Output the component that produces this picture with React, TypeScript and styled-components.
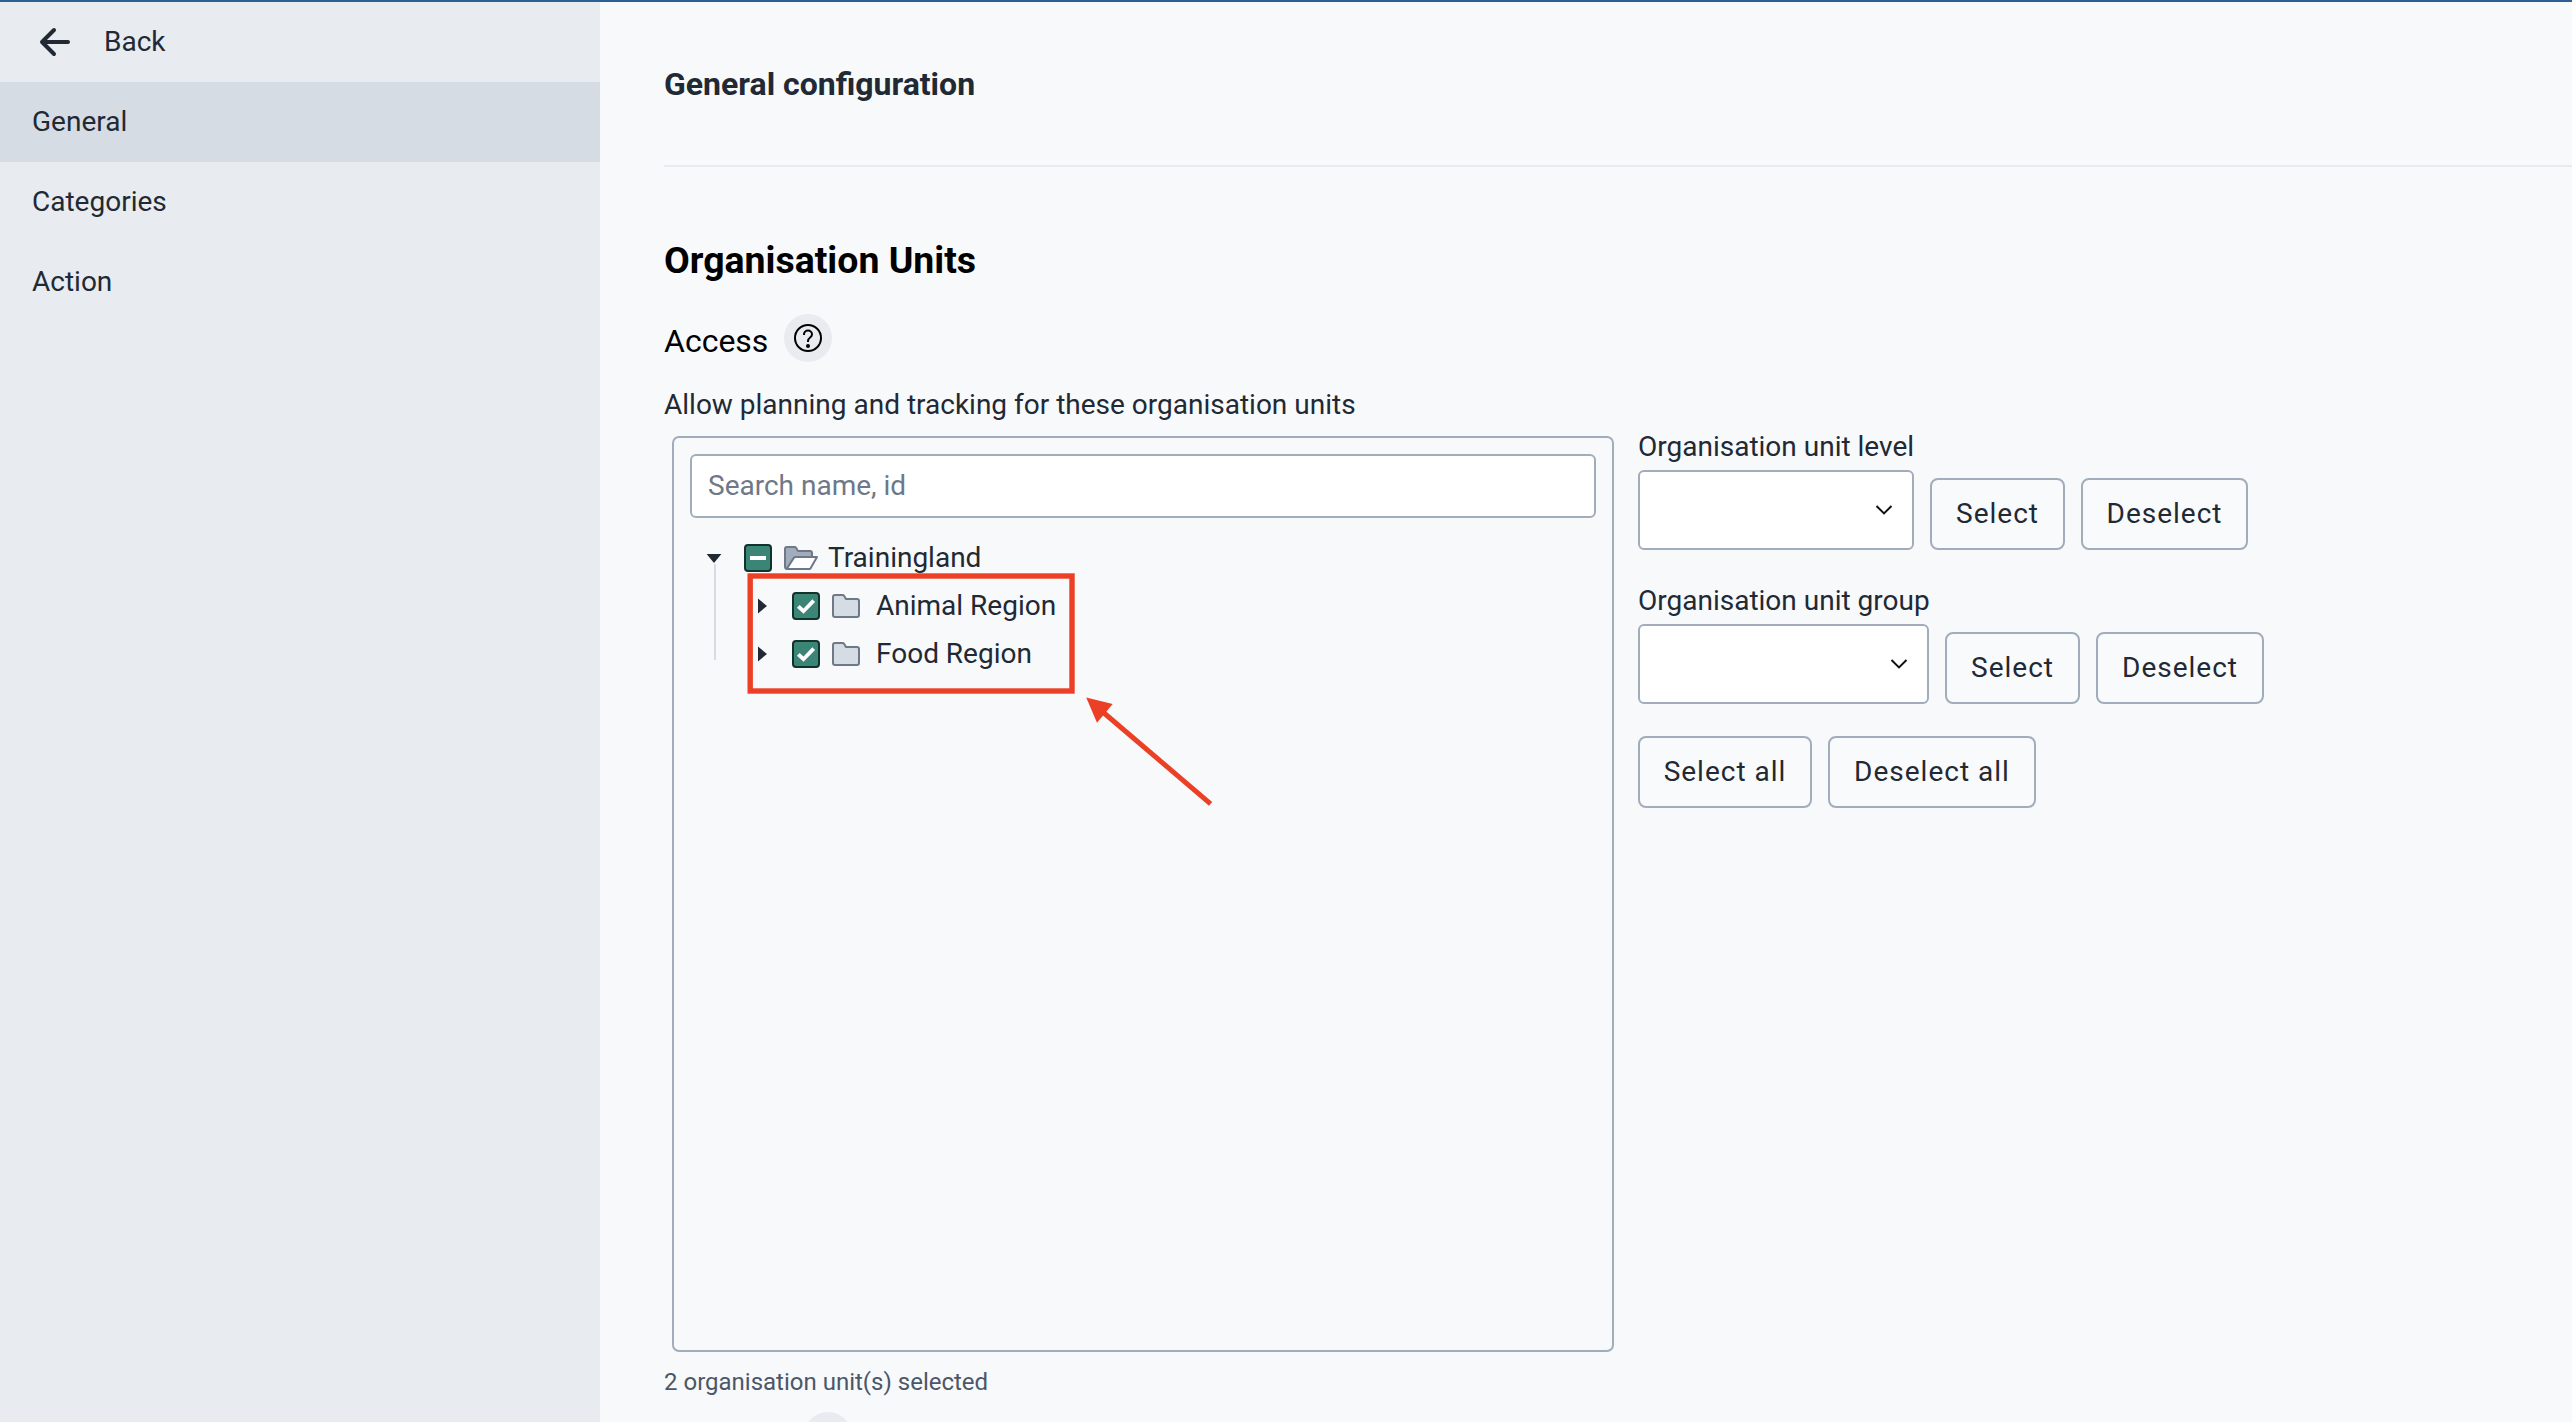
import React from "react";
import styled, { createGlobalStyle } from "styled-components";

const color = {
  page: "#f8f9fb",
  sidebar: "#e8ebf0",
  active: "#d6dce4",
  border: "#a1adbb",
  text: "#212934",
  muted: "#4b5768",
  placeholder: "#6e7888",
  teal: "#3b8577",
  tealDark: "#12322c",
  red: "#eb4026",
};

const GlobalStyle = createGlobalStyle`
  *, *::before, *::after { box-sizing: border-box; }
  body { margin: 0; background: ${color.page}; overflow: hidden; }
  button, input { font: inherit; color: inherit; }
`;

const Page = styled.div`
  display: flex;
  height: 1422px;
  overflow: hidden;
  border-top: 2px solid #2c5f93;
  background: ${color.page};
  color: ${color.text};
  font-family: Roboto, "Liberation Sans", sans-serif;
  font-size: 28px;
  -webkit-font-smoothing: antialiased;
`;

const Sidebar = styled.nav`
  flex: 0 0 600px;
  background: ${color.sidebar};
`;

const NavItem = styled.a<{ $active?: boolean }>`
  display: flex;
  align-items: center;
  height: 80px;
  padding: 0 32px 2px;
  background: ${(p) => (p.$active ? color.active : "transparent")};
`;

const BackItem = styled(NavItem)`
  padding: 0 38px 2px;
  gap: 32px;

  svg {
    position: relative;
    top: 1px;
  }
`;

const Main = styled.main`
  flex: 1;
  min-width: 0;
  padding-left: 64px;
`;

const Header = styled.header`
  display: flex;
  align-items: center;
  height: 165px;
  border-bottom: 2px solid #e8ebf0;
`;

const Title = styled.h1`
  margin: 0;
  font-size: 32px;
  font-weight: 700;
  line-height: 40px;
`;

const SectionTitle = styled.h2`
  margin: 73px 0 34px;
  color: #000;
  font-size: 37.44px;
  font-weight: 700;
  line-height: 40px;
`;

const SubHeading = styled.div`
  display: flex;
  align-items: center;
  gap: 16px;
  height: 48px;
  color: #000;
  font-size: 32px;
`;

const SubHeadingText = styled.span`
  width: 104px;
  padding-top: 6px;
`;

const HelpBadge = styled.span<{ $offset?: number }>`
  display: flex;
  align-items: center;
  justify-content: center;
  width: 48px;
  height: 48px;
  margin-left: ${(p) => p.$offset ?? 0}px;
  border-radius: 50%;
  background: ${color.sidebar};
`;

const Description = styled.p`
  margin: 23px 0 0;
  line-height: 40px;
`;

const Columns = styled.div`
  display: flex;
  align-items: flex-start;
  gap: 24px;
`;

const TreePanel = styled.section`
  position: relative;
  width: 942px;
  height: 916px;
  margin: 11px 0 0 8px;
  padding: 16px;
  border: 2px solid ${color.border};
  border-radius: 7px;
`;

const SearchInput = styled.input`
  display: block;
  width: 100%;
  height: 64px;
  margin-bottom: 16px;
  padding: 0 16px 2px;
  border: 2px solid ${color.border};
  border-radius: 6px;
  background: #fff;
  outline: none;

  &::placeholder {
    color: ${color.placeholder};
    opacity: 1;
  }
`;

const Tree = styled.div`
  padding-left: 6px;
`;

const TreeNode = styled.div`
  display: flex;
`;

const ToggleColumn = styled.div`
  display: flex;
  flex-direction: column;
  flex: 0 0 48px;
`;

const Guide = styled.span`
  flex: 1;
  width: 2px;
  margin: 0 0 18px 18px;
  background: ${color.active};
`;

const ToggleIcon = styled.svg`
  display: block;
  flex: none;
  width: 48px;
  height: 30px;
  overflow: visible;
`;

const NodeRow = styled.div`
  display: flex;
  align-items: center;
  height: 48px;
`;

const NodeIcon = styled.svg`
  width: 36px;
  height: 28px;
  margin: 0 8px 0 12px;
`;

const NodeLabel = styled.span`
  padding-bottom: 1px;
`;

const Markup = styled.svg`
  position: absolute;
  left: 66px;
  top: 132px;
  width: 484px;
  height: 244px;
`;

const Controls = styled.aside`
  padding-top: 6px;
`;

const ControlRow = styled.div<{ $gapBelow?: number }>`
  display: flex;
  align-items: flex-end;
  gap: 16px;
  margin-bottom: ${(p) => p.$gapBelow ?? 0}px;
`;

const Field = styled.label<{ $width: number }>`
  display: flex;
  flex-direction: column;
  gap: 7px;
  width: ${(p) => p.$width}px;
  line-height: 32px;
  white-space: nowrap;
`;

const SelectBox = styled.span`
  display: flex;
  align-items: center;
  justify-content: flex-end;
  height: 80px;
  padding-right: 19px;
  border: 2px solid ${color.border};
  border-radius: 6px;
  background: #fff;
`;

const Button = styled.button<{ $width: number }>`
  width: ${(p) => p.$width}px;
  height: 72px;
  padding: 0 0 2px 0;
  border: 2px solid ${color.border};
  border-radius: 8px;
  background: #f9fafb;
  letter-spacing: 1px;
  white-space: nowrap;
`;

const Summary = styled.p`
  margin: 14px 0;
  color: ${color.muted};
  font-size: 24px;
  line-height: 32px;
`;

const BackArrow = () => (
  <svg width="34" height="32" viewBox="0 0 34 32" fill="none" stroke={color.text} strokeWidth="4" strokeLinecap="round" strokeLinejoin="round">
    <path d="M16 4 L4 16 L16 28 M4 16 H30" />
  </svg>
);

const HelpIcon = () => (
  <svg width="32" height="32" viewBox="0 0 32 32" fill="none" stroke="#000" strokeWidth="2">
    <circle cx="16" cy="16" r="13" />
    <path d="M12 13 V12.6 A4 4 0 0 1 20 12.6 C20 15.6 16 15.4 16 19 V20" />
    <circle cx="16" cy="24" r="2" fill="#000" stroke="none" />
  </svg>
);

const Chevron = () => (
  <svg width="18" height="12" viewBox="0 0 18 12" fill="none" stroke="#111" strokeWidth="2">
    <path d="M1.5 2 L9 9.4 L16.5 2" />
  </svg>
);

const Checkbox = ({ partial }: { partial?: boolean }) => (
  <svg width="28" height="28" viewBox="0 0 28 28" fill="none">
    <rect x="1" y="1" width="26" height="26" rx="3" fill={color.teal} stroke={color.tealDark} strokeWidth="2" />
    {partial ? (
      <path d="M6 14 H22" stroke="#fff" strokeWidth="4" />
    ) : (
      <path d="M6.3 14.3 L11.5 19.2 L21.7 8.6" stroke="#fff" strokeWidth="3.8" />
    )}
  </svg>
);

const Folder = () => (
  <NodeIcon viewBox="0 0 36 28" fill={color.active} stroke={color.placeholder} strokeWidth="2">
    <path d="M1 5 Q1 3 3 3 H10.5 Q11.6 3 12.2 4 L14 7 H25 Q27 7 27 9 V23 Q27 25 25 25 H3 Q1 25 1 23 Z" />
  </NodeIcon>
);

const OpenFolder = () => (
  <NodeIcon viewBox="0 0 36 28" stroke={color.placeholder} strokeWidth="2" strokeLinejoin="round">
    <path d="M2.5 25 Q1 24.6 1 23 V5 Q1 3 3 3 H10.5 Q11.6 3 12.2 4 L14 7 H26 Q28 7 28 9 V14 L12 14 Z" fill={color.border} />
    <path d="M11.6 13 H33 L26.6 24.2 Q26.2 25 25.2 25 H4 Q2.8 25 3.5 23.8 L9.8 13.9 Q10.4 13 11.6 13 Z" fill="#fff" />
  </NodeIcon>
);

const Region = ({ name }: { name: string }) => (
  <TreeNode>
    <ToggleColumn>
      <ToggleIcon viewBox="0 0 48 30">
        <path d="M14 16.6 L23 24 L14 31.4 Z" fill={color.text} />
      </ToggleIcon>
    </ToggleColumn>
    <NodeRow>
      <Checkbox />
      <Folder />
      <NodeLabel>{name}</NodeLabel>
    </NodeRow>
  </TreeNode>
);

interface LevelRowProps {
  label: string;
  width: number;
  deselectWidth: number;
  gapBelow: number;
}

const LevelRow = ({ label, width, deselectWidth, gapBelow }: LevelRowProps) => (
  <ControlRow $gapBelow={gapBelow}>
    <Field $width={width}>
      {label}
      <SelectBox>
        <Chevron />
      </SelectBox>
    </Field>
    <Button $width={135}>Select</Button>
    <Button $width={deselectWidth}>Deselect</Button>
  </ControlRow>
);

export default function App() {
  return (
    <>
      <GlobalStyle />
      <Page>
        <Sidebar>
          <BackItem>
            <BackArrow />
            Back
          </BackItem>
          <NavItem $active>General</NavItem>
          <NavItem>Categories</NavItem>
          <NavItem>Action</NavItem>
        </Sidebar>
        <Main>
          <Header>
            <Title>General configuration</Title>
          </Header>
          <SectionTitle>Organisation Units</SectionTitle>
          <SubHeading>
            <SubHeadingText>Access</SubHeadingText>
            <HelpBadge>
              <HelpIcon />
            </HelpBadge>
          </SubHeading>
          <Description>Allow planning and tracking for these organisation units</Description>
          <Columns>
            <TreePanel>
              <SearchInput placeholder="Search name, id" />
              <Tree>
                <TreeNode>
                  <ToggleColumn>
                    <ToggleIcon viewBox="0 0 48 30">
                      <path d="M10.6 20 H25.4 L18 29 Z" fill={color.text} />
                    </ToggleIcon>
                    <Guide />
                  </ToggleColumn>
                  <div>
                    <NodeRow>
                      <Checkbox partial />
                      <OpenFolder />
                      <NodeLabel>Trainingland</NodeLabel>
                    </NodeRow>
                    <Region name="Animal Region" />
                    <Region name="Food Region" />
                  </div>
                </TreeNode>
              </Tree>
              <Markup viewBox="740 570 484 244" fill="none" stroke={color.red} strokeWidth="5">
                <rect x="750.2" y="576" width="321.8" height="115" strokeWidth="5.4" />
                <path d="M1104 713 L1210.6 803.8" />
                <path d="M1086.2 697.6 L1112.7 704 L1097 722.8 Z" fill={color.red} stroke="none" />
              </Markup>
            </TreePanel>
            <Controls>
              <LevelRow label="Organisation unit level" width={276} deselectWidth={167} gapBelow={35} />
              <LevelRow label="Organisation unit group" width={291} deselectWidth={168} gapBelow={32} />
              <ControlRow>
                <Button $width={174}>Select all</Button>
                <Button $width={208}>Deselect all</Button>
              </ControlRow>
            </Controls>
          </Columns>
          <Summary>2 organisation unit(s) selected</Summary>
          <HelpBadge $offset={140} />
        </Main>
      </Page>
    </>
  );
}
